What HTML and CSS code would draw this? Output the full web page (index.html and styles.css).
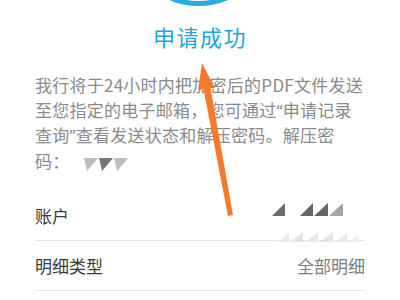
FILE: index.html
```html
<!DOCTYPE html>
<html lang="zh-CN">
<head>
<meta charset="utf-8">
<link rel="stylesheet" href="styles.css">
</head>
<body>
<div class="page">
  <div class="icon-wrap"><div class="ring"></div></div>
  <h1 class="title">申请成功</h1>
  <p class="desc">我行将于24小时内把加密后的PDF文件发送至您指定的电子邮箱，您可通过<span class="q">“</span>申请记录查询<span class="q">”</span>查看发送状态和解压密码。解压密<span class="nowrap">码：<svg class="pwd" width="46" height="14" viewBox="0 0 46 14"><polygon points="0,0 14,0 3,13" fill="#bdbdbd"/><polygon points="15,0 29,0 18,13" fill="#767676"/><polygon points="30,0 44,0 33,13" fill="#bdbdbd"/></svg></span></p>
  <div class="list">
    <div class="row">
      <span class="label">账户</span>
      <svg class="acct" width="93" height="42" viewBox="0 0 93 42"><polygon points="0,14 13,14 13,1" fill="#6c6c6c"/><polygon points="28,14 41,14 41,1" fill="#666"/><polygon points="42,14 56,14 56,1" fill="#666"/><polygon points="57,14 71,14 71,1" fill="#a5a5a5"/><polygon points="6,40 17,40 17,31" fill="#ebebeb"/><polygon points="18,40 31,40 31,30" fill="#e4e4e4"/><polygon points="33,40 46,40 46,30" fill="#e6e6e6"/><polygon points="48,40 61,40 61,30" fill="#e6e6e6"/><polygon points="63,40 75,40 75,31" fill="#eaeaea"/><polygon points="77,40 86,40 86,33" fill="#eeeeee"/></svg>
    </div>
    <div class="row">
      <span class="label">明细类型</span>
      <span class="value">全部明细</span>
    </div>
  </div>
  <svg class="arrow" width="400" height="300" viewBox="0 0 400 300"><polygon points="202,63 215,88 210.5,88 233,215 228,216 203.5,89 198,90" fill="#f47a2e"/></svg>
</div>
</body>
</html>
```
FILE: styles.css
```css
* { box-sizing: border-box; }
html, body { margin: 0; padding: 0; background: #fff; }
body {
  font-family: "Noto Sans CJK SC", "Noto Sans", sans-serif;
  width: 400px;
  height: 300px;
  overflow: hidden;
}
.page {
  position: relative;
  padding: 0 35px;
  height: 300px;
}
.icon-wrap {
  height: 8px;
  overflow: hidden;
  display: flex;
  justify-content: center;
}
.ring {
  flex: none;
  width: 145px;
  height: 145px;
  border: 5px solid #2aa9e9;
  border-radius: 50%;
  margin-top: -139px;
  margin-left: -4px;
}
.title {
  margin: 13px 0 0;
  font-size: 22px;
  line-height: 30px;
  font-weight: 400;
  color: #21a4e2;
  text-align: center;
  letter-spacing: 1.5px;
}
.desc {
  margin: 22px 0 0;
  font-size: 17px;
  line-height: 24.5px;
  color: #8a8a8a;
  letter-spacing: 0.25px;
}
.q { font-family: "Noto Sans", sans-serif; }
.nowrap { white-space: nowrap; }
.pwd {
  margin-left: 14px;
  vertical-align: -4px;
}
.list { margin-top: 18px; }
.row {
  display: flex;
  justify-content: space-between;
  align-items: center;
  height: 50px;
  border-bottom: 1px solid #e6e6e6;
  font-size: 17px;
}
.label { color: #3a3a3a; }
.value { color: #7d7d7d; }
.acct {
  align-self: flex-start;
  margin-top: 11px;
}
.arrow {
  position: absolute;
  left: 0;
  top: 0;
  pointer-events: none;
}
```
